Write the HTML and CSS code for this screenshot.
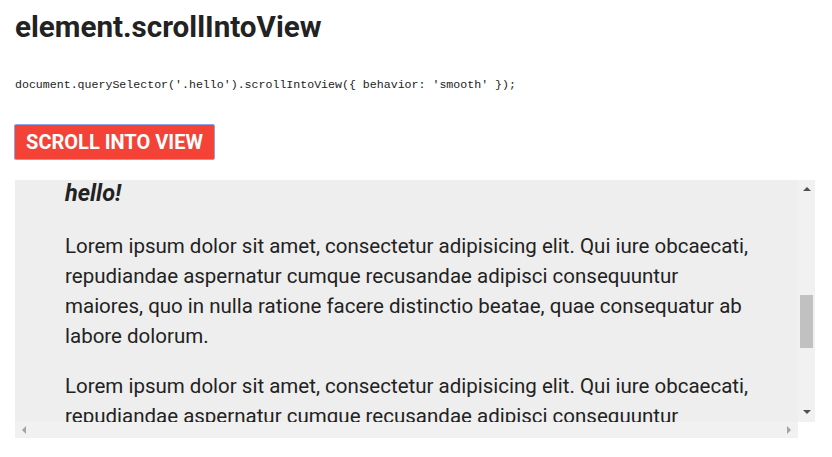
FILE: index.html
```html
<!DOCTYPE html>
<html>
<head>
<meta charset="utf-8">
<link rel="stylesheet" href="styles.css">
</head>
<body>
<h1 class="title">element.scrollIntoView</h1>
<pre class="code">document.querySelector('.hello').scrollIntoView({ behavior: 'smooth' });</pre>
<button class="btn">SCROLL INTO VIEW</button>
<div class="box">
  <div class="viewport">
    <div class="content">
      <h2 class="hello">hello!</h2>
      <p class="para">Lorem ipsum dolor sit amet, consectetur adipisicing elit. Qui iure obcaecati, repudiandae aspernatur cumque recusandae adipisci consequuntur maiores, quo in nulla ratione facere distinctio beatae, quae consequatur ab labore dolorum.</p>
      <p class="para">Lorem ipsum dolor sit amet, consectetur adipisicing elit. Qui iure obcaecati, repudiandae aspernatur cumque recusandae adipisci consequuntur maiores, quo in nulla ratione facere distinctio beatae, quae consequatur ab labore dolorum.</p>
    </div>
    <div class="vbar">
      <span class="arrow up"></span>
      <div class="vtrack"><div class="vthumb"></div></div>
      <span class="arrow down"></span>
    </div>
  </div>
  <div class="hrow">
    <div class="hbar">
      <span class="arrow left"></span>
      <span class="arrow right"></span>
    </div>
    <div class="corner"></div>
  </div>
</div>
</body>
</html>
```

FILE: styles.css
```css
html, body {
  margin: 0;
  padding: 0;
  background: #ffffff;
}
body {
  padding: 0 15px;
  font-family: Roboto, "Liberation Sans", sans-serif;
  color: #222222;
}
.title {
  margin: 10px 0 0;
  font-size: 29.6px;
  line-height: 35px;
  font-weight: 700;
  color: #222222;
}
.code {
  margin: 32px 0 0;
  font-family: "Liberation Mono", "DejaVu Sans Mono", monospace;
  font-size: 11.6px;
  line-height: 16px;
  color: #222222;
}
.btn {
  display: block;
  margin: 31px 0 0 -1px;
  width: 201px;
  height: 36px;
  padding: 0;
  background: #f44336;
  border: 1px solid #8aa4e6;
  border-radius: 2px;
  color: #ffffff;
  font-family: Roboto, "Liberation Sans", sans-serif;
  font-weight: 700;
  font-size: 20px;
  letter-spacing: 0;
}
.box {
  margin-top: 20px;
  width: 800px;
  display: flex;
  flex-direction: column;
}
.viewport {
  display: flex;
  height: 242px;
  background: #eeeeee;
}
.content {
  flex: 1;
  overflow: hidden;
  padding: 0 45px 0 50px;
}
.hello {
  margin: 0;
  font-size: 23.5px;
  line-height: 26px;
  font-style: italic;
  font-weight: 700;
  color: #222222;
}
.para {
  margin: 25px 0 0;
  font-size: 20.5px;
  line-height: 30px;
  color: #222222;
}
.para + .para {
  margin-top: 20px;
}
.vbar {
  width: 17px;
  display: flex;
  flex-direction: column;
  align-items: center;
  background: #f1f1f1;
}
.vtrack {
  flex: 1;
  width: 100%;
  padding-top: 100px;
}
.vthumb {
  margin: 0 auto;
  width: 13px;
  height: 53px;
  background: #c1c1c1;
}
.arrow {
  display: block;
  width: 0;
  height: 0;
  border: 4px solid transparent;
}
.up {
  margin: 7px 0 4px;
  border-top: 0;
  border-bottom: 4px solid #505050;
}
.down {
  margin: 4px 0 8px;
  border-bottom: 0;
  border-top: 4px solid #505050;
}
.hrow {
  display: flex;
  height: 16px;
}
.hbar {
  flex: 1;
  background: #f1f1f1;
  display: flex;
  align-items: center;
  justify-content: space-between;
  padding: 0 7px;
}
.left {
  border-left: 0;
  border-right: 4px solid #a3a3a3;
}
.right {
  border-right: 0;
  border-left: 4px solid #a3a3a3;
}
.corner {
  width: 17px;
  background: #ffffff;
}
```
